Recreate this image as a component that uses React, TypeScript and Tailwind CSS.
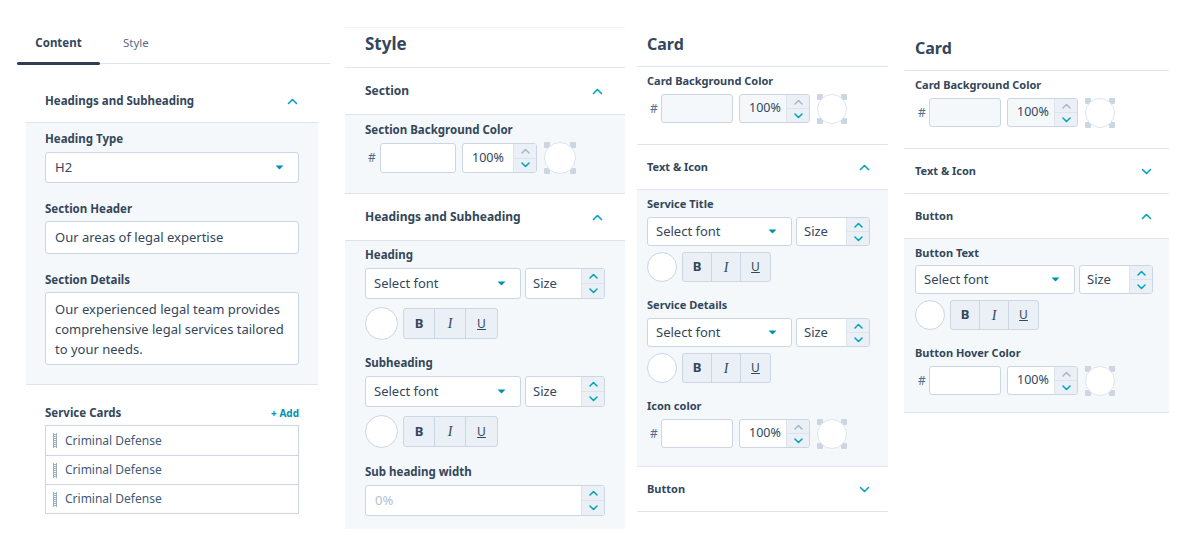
import React from "react";

const TXT = "text-[#33475b]";

function ChevronUp({ className = "" }: { className?: string }) {
  return (
    <svg width="11" height="7" viewBox="0 0 11 7" className={className} fill="none">
      <path d="M1.5 5.5 L5.5 1.5 L9.5 5.5" stroke="#00a4bd" strokeWidth="1.6" strokeLinecap="round" strokeLinejoin="round" />
    </svg>
  );
}
function ChevronDown({ className = "" }: { className?: string }) {
  return (
    <svg width="11" height="7" viewBox="0 0 11 7" className={className} fill="none">
      <path d="M1.5 1.5 L5.5 5.5 L9.5 1.5" stroke="#00a4bd" strokeWidth="1.6" strokeLinecap="round" strokeLinejoin="round" />
    </svg>
  );
}
function SmallChev({ up, color }: { up: boolean; color: string }) {
  return (
    <svg width="9" height="6" viewBox="0 0 9 6" fill="none">
      <path d={up ? "M1 5 L4.5 1.5 L8 5" : "M1 1 L4.5 4.5 L8 1"} stroke={color} strokeWidth="1.5" strokeLinecap="round" strokeLinejoin="round" />
    </svg>
  );
}
function Caret() {
  return (
    <svg width="9" height="5" viewBox="0 0 9 5">
      <path d="M0.5 0.5 L8.5 0.5 L4.5 4.5 Z" fill="#0091ae" />
    </svg>
  );
}

function Spinner({ upTeal = true }: { upTeal?: boolean }) {
  return (
    <div className="flex w-[23px] shrink-0 flex-col border-l border-[#dfe3eb] bg-[#eaf0f6]">
      <div className="flex flex-1 items-center justify-center border-b border-[#dfe3eb]">
        <SmallChev up color={upTeal ? "#00a4bd" : "#a6b8cb"} />
      </div>
      <div className="flex flex-1 items-center justify-center">
        <SmallChev up={false} color="#00a4bd" />
      </div>
    </div>
  );
}

function Label({ children, className = "" }: { children: React.ReactNode; className?: string }) {
  return <div className={`text-[11.5px] font-bold leading-4 ${TXT} ${className}`}>{children}</div>;
}

function Swatch({ size }: { size: number }) {
  return (
    <div className="relative shrink-0" style={{ width: size, height: size }}>
      <div className="absolute left-0 top-0 h-[6px] w-[6px] rounded-[1px] bg-[#cbd6e2]" />
      <div className="absolute right-0 top-0 h-[6px] w-[6px] rounded-[1px] bg-[#cbd6e2]" />
      <div className="absolute bottom-0 left-0 h-[6px] w-[6px] rounded-[1px] bg-[#cbd6e2]" />
      <div className="absolute bottom-0 right-0 h-[6px] w-[6px] rounded-[1px] bg-[#cbd6e2]" />
      <div className="absolute inset-0 rounded-full border border-[#dfe3eb] bg-white" />
    </div>
  );
}

function ColorRow({
  hexW,
  pctW,
  sw,
  h,
  hexBg = "bg-white",
  pctBg = "bg-white",
  hashPad,
}: {
  hexW: number;
  pctW: number;
  sw: number;
  h: number;
  hexBg?: string;
  pctBg?: string;
  hashPad: number;
}) {
  return (
    <div className="flex items-center" style={{ height: h }}>
      <div className="text-[12px] text-[#516f90]" style={{ width: hashPad }}>
        <span className="pl-[3px]">#</span>
      </div>
      <div className={`h-full rounded-[3px] border border-[#cbd6e2] ${hexBg}`} style={{ width: hexW }} />
      <div className={`ml-[6px] flex h-full overflow-hidden rounded-[3px] border border-[#cbd6e2] ${pctBg}`} style={{ width: pctW }}>
        <div className="flex flex-1 items-center pl-[9px] text-[12.5px] text-[#33475b]">100%</div>
        <Spinner upTeal={false} />
      </div>
      <div className="ml-[7px]">
        <Swatch size={sw} />
      </div>
    </div>
  );
}

function FontRow({ selW, sizeW, h }: { selW: number; sizeW: number; h: number }) {
  return (
    <div className="flex gap-[4px]" style={{ height: h }}>
      <div className="flex h-full items-center justify-between rounded-[3px] border border-[#cbd6e2] bg-white pl-[8px] pr-[14px] text-[13px] text-[#33475b]" style={{ width: selW }}>
        <span>Select font</span>
        <Caret />
      </div>
      <div className="flex h-full overflow-hidden rounded-[3px] border border-[#cbd6e2] bg-white" style={{ width: sizeW }}>
        <div className="flex flex-1 items-center pl-[7px] text-[13px] text-[#33475b]">Size</div>
        <Spinner />
      </div>
    </div>
  );
}

function StyleRow({ circle, btnW, h }: { circle: number; btnW: number; h: number }) {
  return (
    <div className="flex items-center" style={{ height: circle }}>
      <div className="shrink-0 rounded-full border border-[#cbd6e2] bg-white" style={{ width: circle, height: circle }} />
      <div className="ml-[5px] flex overflow-hidden rounded-[3px] border border-[#cbd6e2] bg-[#eaf0f6]" style={{ height: h }}>
        <div className="flex items-center justify-center border-r border-[#cbd6e2] text-[13px] font-bold text-[#33475b]" style={{ width: btnW }}>
          B
        </div>
        <div className="flex items-center justify-center border-r border-[#cbd6e2] font-['Liberation_Serif',serif] text-[14px] italic text-[#33475b]" style={{ width: btnW }}>
          I
        </div>
        <div className="flex items-center justify-center text-[12px] text-[#33475b] underline" style={{ width: btnW }}>
          U
        </div>
      </div>
    </div>
  );
}

function AccHeader({
  title,
  open,
  h,
  padL,
  padR,
  size = "text-[11.5px]",
}: {
  title: string;
  open: boolean;
  h: number;
  padL: number;
  padR: number;
  size?: string;
}) {
  return (
    <div className="flex items-center justify-between border-b border-[#dfe3eb] bg-white" style={{ height: h, paddingLeft: padL, paddingRight: padR }}>
      <span className={`${size} font-bold ${TXT}`}>{title}</span>
      {open ? <ChevronUp /> : <ChevronDown />}
    </div>
  );
}

function Handle() {
  return (
    <svg width="4" height="15" viewBox="0 0 4 15">
      <rect x="0" y="0" width="1" height="15" fill="#99afc4" />
      <rect x="3" y="0" width="1" height="15" fill="#99afc4" />
      {[1, 3, 5, 7, 9, 11, 13].map((y) => (
        <rect key={y} x="0" y={y} width="4" height="1" fill="#99afc4" />
      ))}
    </svg>
  );
}

function Panel1() {
  return (
    <div className="ml-[17px] w-[313px] shrink-0">
      <div className="relative flex h-[64px] border-b border-[#dfe3eb]">
        <div className="relative flex h-[63px] w-[83px] items-center justify-center pt-[22px]">
          <span className="text-[11.5px] font-bold text-[#33475b]">Content</span>
          <div className="absolute bottom-[-2px] left-0 h-[3px] w-[83px] rounded-full bg-[#2d3e50]" />
        </div>
        <div className="flex h-[63px] items-center pl-[23px] pt-[22px]">
          <span className="text-[11.5px] text-[#516f90]">Style</span>
        </div>
      </div>
      <div className="ml-[9px] mr-[12px] mt-[16px]">
        <AccHeader title="Headings and Subheading" open h={43} padL={19} padR={20} />
        <div className="border-b border-[#dfe3eb] bg-[#f5f8fa] px-[19px] pt-[8px] pb-[19px]">
          <Label>Heading Type</Label>
          <div className="mt-[5px] flex h-[31px] items-center justify-between rounded-[3px] border border-[#cbd6e2] bg-white pl-[9px] pr-[14px] text-[13px] text-[#33475b]">
            <span>H2</span>
            <Caret />
          </div>
          <Label className="mt-[18px]">Section Header</Label>
          <div className="mt-[4px] flex h-[33px] items-center rounded-[3px] border border-[#cbd6e2] bg-white pl-[9px] text-[13px] text-[#33475b]">
            Our areas of legal expertise
          </div>
          <Label className="mt-[18px]">Section Details</Label>
          <div className="mt-[4px] h-[73px] rounded-[3px] border border-[#cbd6e2] bg-white pl-[9px] pr-[6px] pt-[6px] text-[13px] leading-[20px] text-[#33475b]">
            Our experienced legal team provides comprehensive legal services tailored to your needs.
          </div>
        </div>
        <div className="px-[19px] pt-[20px]">
          <div className="flex items-center justify-between">
            <Label>Service Cards</Label>
            <span className="text-[10px] font-bold text-[#0091ae]">+ Add</span>
          </div>
          <div className="mt-[4px] border border-[#cbd6e2] bg-white">
            {[0, 1, 2].map((i) => (
              <div key={i} className={`flex h-[29px] items-center pl-[7px] ${i > 0 ? "border-t border-[#cbd6e2]" : ""}`}>
                <Handle />
                <span className="ml-[8px] text-[12px] text-[#425b76]">Criminal Defense</span>
              </div>
            ))}
          </div>
        </div>
      </div>
    </div>
  );
}

function Panel2() {
  return (
    <div className="ml-[15px] mt-[27px] h-[501px] w-[280px] shrink-0 border-t border-[#eef2f6]">
      <div className="flex h-[40px] items-start border-b border-[#dfe3eb] pl-[20px] pt-[5px]">
        <span className="text-[17px] font-bold leading-[22px] text-[#33475b]">Style</span>
      </div>
      <AccHeader title="Section" open h={47} padL={20} padR={22} size="text-[12px]" />
      <div className="border-b border-[#dfe3eb] bg-[#f5f8fa] pl-[20px] pt-[7px] pb-[20px]">
        <Label>Section Background Color</Label>
        <div className="mt-[5px]">
          <ColorRow hexW={76} pctW={75} sw={32} h={30} hashPad={15} />
        </div>
      </div>
      <AccHeader title="Headings and Subheading" open h={47} padL={20} padR={22} size="text-[12px]" />
      <div className="bg-[#f5f8fa] pl-[20px] pt-[6px] pb-[13px]">
        <Label>Heading</Label>
        <div className="mt-[5px]">
          <FontRow selW={156} sizeW={80} h={31} />
        </div>
        <div className="mt-[8px]">
          <StyleRow circle={33} btnW={31} h={31} />
        </div>
        <Label className="mt-[15px]">Subheading</Label>
        <div className="mt-[5px]">
          <FontRow selW={156} sizeW={80} h={31} />
        </div>
        <div className="mt-[8px]">
          <StyleRow circle={33} btnW={31} h={31} />
        </div>
        <Label className="mt-[16px]">Sub heading width</Label>
        <div className="mt-[5px] flex h-[31px] w-[240px] overflow-hidden rounded-[3px] border border-[#cbd6e2] bg-white">
          <div className="flex flex-1 items-center pl-[9px] text-[13px] text-[#b0c1d4]">0%</div>
          <Spinner />
        </div>
      </div>
    </div>
  );
}

function Panel3() {
  return (
    <div className="ml-[12px] w-[251px] shrink-0">
      <div className="border-b border-[#dfe3eb] pl-[10px] pt-[33px] pb-[11px]">
        <span className="block text-[16px] font-bold leading-[22px] text-[#33475b]">Card</span>
      </div>
      <div className="border-b border-[#dfe3eb] pl-[10px] pt-[6px] pb-[21px]">
        <Label className="text-[11px]">Card Background Color</Label>
        <div className="mt-[5px]">
          <ColorRow hexW={72} pctW={71} sw={30} h={29} hexBg="bg-[#f5f8fa]" pctBg="bg-[#f5f8fa]" hashPad={14} />
        </div>
      </div>
      <AccHeader title="Text & Icon" open h={45} padL={10} padR={18} size="text-[11px]" />
      <div className="border-b border-[#dfe3eb] bg-[#f5f8fa] pl-[10px] pt-[6px] pb-[18px]">
        <Label className="text-[11px]">Service Title</Label>
        <div className="mt-[5px]">
          <FontRow selW={145} sizeW={74} h={29} />
        </div>
        <div className="mt-[6px]">
          <StyleRow circle={30} btnW={29} h={30} />
        </div>
        <Label className="mt-[15px] text-[11px]">Service Details</Label>
        <div className="mt-[5px]">
          <FontRow selW={145} sizeW={74} h={29} />
        </div>
        <div className="mt-[6px]">
          <StyleRow circle={30} btnW={29} h={30} />
        </div>
        <Label className="mt-[15px] text-[11px]">Icon color</Label>
        <div className="mt-[5px]">
          <ColorRow hexW={72} pctW={71} sw={30} h={29} hashPad={14} />
        </div>
      </div>
      <AccHeader title="Button" open={false} h={45} padL={10} padR={18} size="text-[11px]" />
    </div>
  );
}

function Panel4() {
  return (
    <div className="ml-[16px] w-[265px] shrink-0">
      <div className="border-b border-[#dfe3eb] pl-[11px] pt-[37px] pb-[11px]">
        <span className="block text-[16px] font-bold leading-[22px] text-[#33475b]">Card</span>
      </div>
      <div className="border-b border-[#dfe3eb] pl-[11px] pt-[6px] pb-[21px]">
        <Label className="text-[11px]">Card Background Color</Label>
        <div className="mt-[5px]">
          <ColorRow hexW={72} pctW={71} sw={30} h={29} hexBg="bg-[#f5f8fa]" pctBg="bg-[#f5f8fa]" hashPad={14} />
        </div>
      </div>
      <AccHeader title="Text & Icon" open={false} h={45} padL={11} padR={17} size="text-[11px]" />
      <AccHeader title="Button" open h={45} padL={11} padR={17} size="text-[11px]" />
      <div className="border-b border-[#dfe3eb] bg-[#f5f8fa] pl-[11px] pt-[6px] pb-[17px]">
        <Label className="text-[11px]">Button Text</Label>
        <div className="mt-[4px]">
          <FontRow selW={160} sizeW={74} h={29} />
        </div>
        <div className="mt-[6px]">
          <StyleRow circle={30} btnW={29} h={30} />
        </div>
        <Label className="mt-[15px] text-[11px]">Button Hover Color</Label>
        <div className="mt-[5px]">
          <ColorRow hexW={72} pctW={71} sw={30} h={29} hashPad={14} />
        </div>
      </div>
    </div>
  );
}

export default function App() {
  return (
    <div className="flex h-[556px] w-[1195px] items-start overflow-hidden bg-white font-['Noto_Sans',sans-serif]">
      <Panel1 />
      <Panel2 />
      <Panel3 />
      <Panel4 />
    </div>
  );
}
